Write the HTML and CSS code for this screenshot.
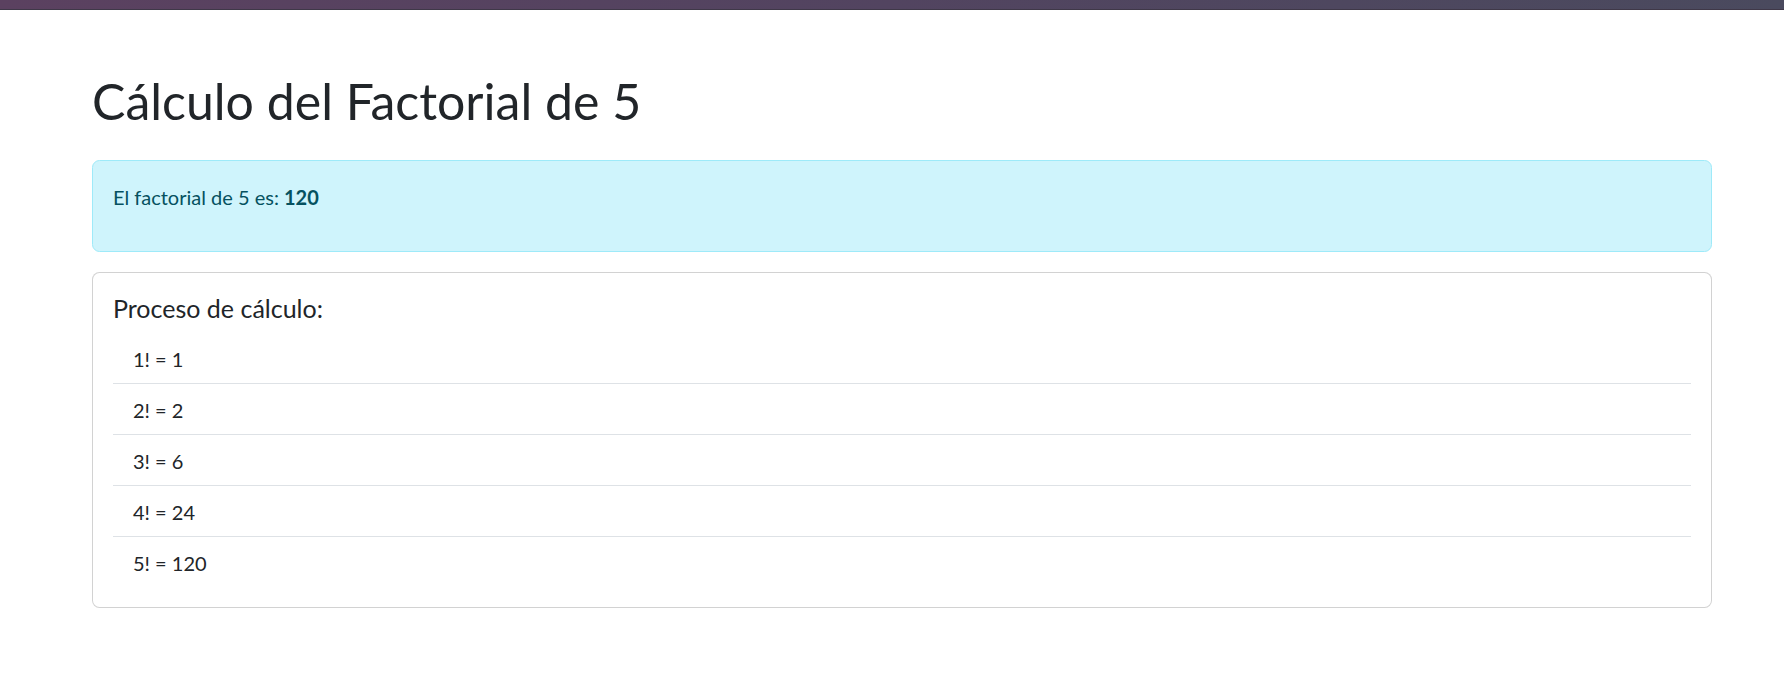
FILE: index.html
```html
<!DOCTYPE html>
<html lang="es">
<head>
<meta charset="utf-8">
<title>Factorial</title>
<link rel="stylesheet" href="styles.css">
</head>
<body>
<div class="topbar"></div>
<div class="container">
  <h1 class="title">Cálculo del Factorial de 5</h1>
  <div class="alert">
    <p class="alert-text">El factorial de 5 es: <strong>120</strong></p>
  </div>
  <div class="card">
    <div class="card-body">
      <h5 class="card-title">Proceso de cálculo:</h5>
      <ul class="steps">
        <li class="step">1! = 1</li>
        <li class="step">2! = 2</li>
        <li class="step">3! = 6</li>
        <li class="step">4! = 24</li>
        <li class="step">5! = 120</li>
      </ul>
    </div>
  </div>
</div>
</body>
</html>
```
FILE: styles.css
```css
* { box-sizing: border-box; }
html, body { margin: 0; padding: 0; background: #fff; }
body {
  font-family: Lato, "Liberation Sans", sans-serif;
  font-size: 20px;
  line-height: 30px;
  color: #212529;
}
.topbar {
  height: 10px;
  background: linear-gradient(90deg, #5b4160 0%, #524460 50%, #4a4a5e 100%);
  border-bottom: 1px solid #3f3848;
}
.container {
  width: 1620px;
  margin-left: 92px;
}
.title {
  margin: 60px 0 30px;
  padding-top: 1px;
  height: 60px;
  font-size: 50px;
  line-height: 60px;
  font-weight: 400;
  color: #212529;
}
.alert {
  background: #cff4fc;
  border: 1px solid #9eeaf9;
  border-radius: 7.5px;
  color: #055160;
  padding: 21px 20px 19px;
  margin-bottom: 20px;
}
.alert-text { margin: 0 0 20px; }
.alert-text strong { font-weight: 700; }
.card {
  border: 1px solid rgba(0, 0, 0, 0.175);
  border-radius: 7.5px;
  background: #fff;
}
.card-body { padding: 20px; }
.card-title {
  margin: 0 0 10px;
  font-size: 25px;
  line-height: 30px;
  font-weight: 400;
}
.steps {
  list-style: none;
  margin: 0;
  padding: 0;
}
.step {
  padding: 11px 20px 9px;
  border-bottom: 1px solid #dee2e6;
}
.step:last-child { border-bottom: 0; }
```
